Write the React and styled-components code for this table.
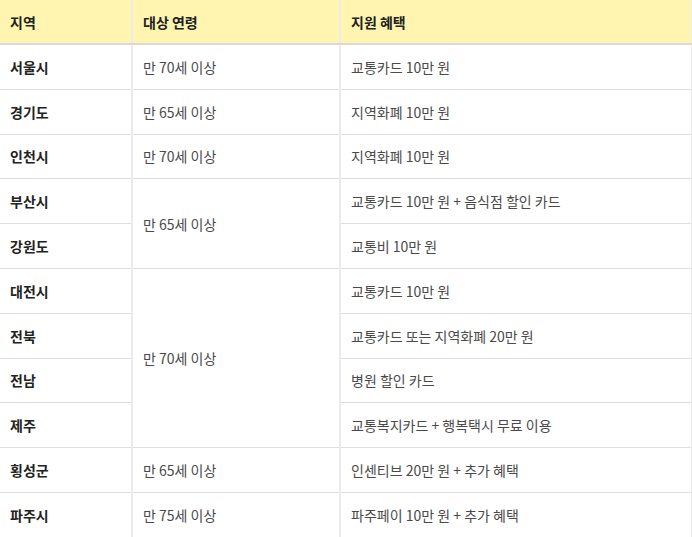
import React from "react"
import styled, {createGlobalStyle} from "styled-components"

const GlobalStyle = createGlobalStyle`
  html, body {
    margin: 0;
    padding: 0;
    background: #fff;
  }
  body {
    font-family: "Noto Sans CJK KR", "Noto Sans", sans-serif;
  }
`

const Table = styled.table`
  width: 692px;
  border-collapse: collapse;
  table-layout: fixed;
  font-size: 14px;
  color: #444;
`
const Col = styled.col`
  width: ${props => props.w}px;
`
const HeadCell = styled.th`
  height: 43px;
  padding: 0 10px;
  text-align: left;
  font-weight: 700;
  color: #222;
  background-color: #fff5b1;
  border-left: 2px solid #ebebeb;
  border-right: 2px solid #ebebeb;
  border-bottom: 2px solid #d9d9d9;

  &:first-child {
    border-left: none;
  }
`
const Row = styled.tr`
  & > td {
    height: 43.8px;
    border-bottom: 1px solid #dedede;
  }
`
const Cell = styled.td`
  padding: 0 10px;
  vertical-align: middle;
  border-left: 2px solid #ebebeb;
  border-right: 2px solid #ebebeb;
  font-weight: ${props => (props.region ? 700 : 400)};
  color: ${props => (props.region ? "#222" : "#4a4a4a")};

  &:first-child {
    border-left: none;
  }
`

const rows = [
  {region: "서울시", age: "만 70세 이상", benefit: "교통카드 10만 원"},
  {region: "경기도", age: "만 65세 이상", benefit: "지역화폐 10만 원"},
  {region: "인천시", age: "만 70세 이상", benefit: "지역화폐 10만 원"},
  {region: "부산시", age: "만 65세 이상", span: 2, benefit: "교통카드 10만 원 + 음식점 할인 카드"},
  {region: "강원도", benefit: "교통비 10만 원"},
  {region: "대전시", age: "만 70세 이상", span: 4, benefit: "교통카드 10만 원"},
  {region: "전북", benefit: "교통카드 또는 지역화폐 20만 원"},
  {region: "전남", benefit: "병원 할인 카드"},
  {region: "제주", benefit: "교통복지카드 + 행복택시 무료 이용"},
  {region: "횡성군", age: "만 65세 이상", benefit: "인센티브 20만 원 + 추가 혜택"},
  {region: "파주시", age: "만 75세 이상", benefit: "파주페이 10만 원 + 추가 혜택"},
]

export default function App() {
  return (
    <>
      <GlobalStyle />
      <Table>
        <colgroup>
          <Col w={132} />
          <Col w={208} />
          <Col w={352} />
        </colgroup>
        <thead>
          <tr>
            <HeadCell>지역</HeadCell>
            <HeadCell>대상 연령</HeadCell>
            <HeadCell>지원 혜택</HeadCell>
          </tr>
        </thead>
        <tbody>
          {rows.map(r => (
            <Row key={r.region}>
              <Cell region>{r.region}</Cell>
              {r.age && <Cell rowSpan={r.span || 1}>{r.age}</Cell>}
              <Cell>{r.benefit}</Cell>
            </Row>
          ))}
        </tbody>
      </Table>
    </>
  )
}
